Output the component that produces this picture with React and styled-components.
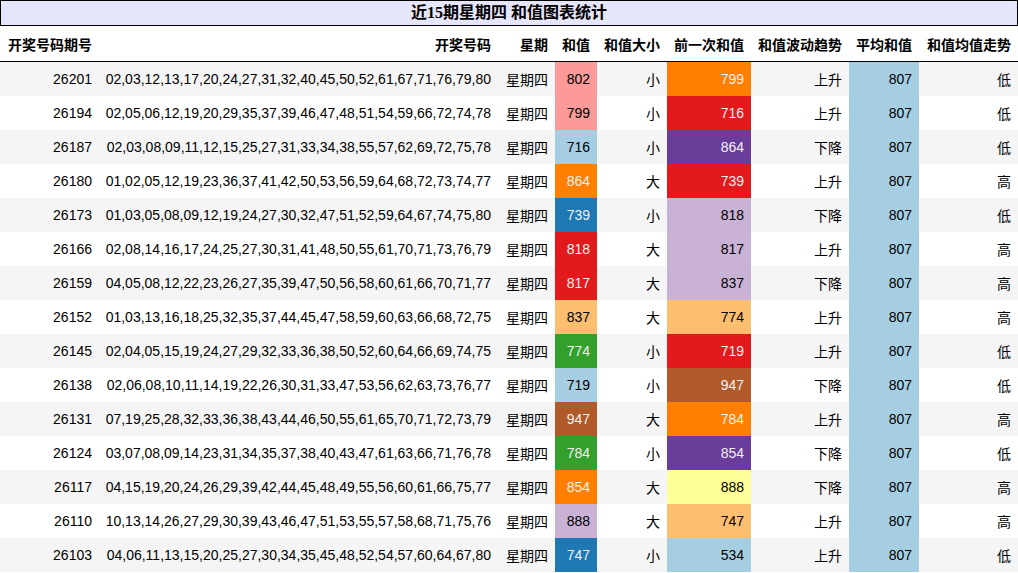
import styled, { createGlobalStyle } from 'styled-components';

const GlobalStyle = createGlobalStyle`
  html, body {
    margin: 0;
    padding: 0;
    background: #ffffff;
  }
  body {
    font-family: 'Liberation Sans', Arial, 'Noto Sans CJK SC', sans-serif;
    color: #000000;
  }
`;

// Paired colormap
const C = {
  lblue: '#a6cee3',
  blue: '#1f78b4',
  green: '#33a02c',
  pink: '#fb9a99',
  red: '#e31a1c',
  lorange: '#fdbf6f',
  orange: '#ff7f00',
  lav: '#cab2d6',
  purple: '#6a3d9a',
  yellow: '#ffff99',
  brown: '#b15928',
};

const DARK = [C.blue, C.green, C.red, C.orange, C.purple, C.brown];

const rows = [
  ['26201', '02,03,12,13,17,20,24,27,31,32,40,45,50,52,61,67,71,76,79,80', 802, 'pink', '小', 799, 'orange', '上升', '低'],
  ['26194', '02,05,06,12,19,20,29,35,37,39,46,47,48,51,54,59,66,72,74,78', 799, 'pink', '小', 716, 'red', '上升', '低'],
  ['26187', '02,03,08,09,11,12,15,25,27,31,33,34,38,55,57,62,69,72,75,78', 716, 'lblue', '小', 864, 'purple', '下降', '低'],
  ['26180', '01,02,05,12,19,23,36,37,41,42,50,53,56,59,64,68,72,73,74,77', 864, 'orange', '大', 739, 'red', '上升', '高'],
  ['26173', '01,03,05,08,09,12,19,24,27,30,32,47,51,52,59,64,67,74,75,80', 739, 'blue', '小', 818, 'lav', '下降', '低'],
  ['26166', '02,08,14,16,17,24,25,27,30,31,41,48,50,55,61,70,71,73,76,79', 818, 'red', '大', 817, 'lav', '上升', '高'],
  ['26159', '04,05,08,12,22,23,26,27,35,39,47,50,56,58,60,61,66,70,71,77', 817, 'red', '大', 837, 'lav', '下降', '高'],
  ['26152', '01,03,13,16,18,25,32,35,37,44,45,47,58,59,60,63,66,68,72,75', 837, 'lorange', '大', 774, 'lorange', '上升', '高'],
  ['26145', '02,04,05,15,19,24,27,29,32,33,36,38,50,52,60,64,66,69,74,75', 774, 'green', '小', 719, 'red', '上升', '低'],
  ['26138', '02,06,08,10,11,14,19,22,26,30,31,33,47,53,56,62,63,73,76,77', 719, 'lblue', '小', 947, 'brown', '下降', '低'],
  ['26131', '07,19,25,28,32,33,36,38,43,44,46,50,55,61,65,70,71,72,73,79', 947, 'brown', '大', 784, 'orange', '上升', '高'],
  ['26124', '03,07,08,09,14,23,31,34,35,37,38,40,43,47,61,63,66,71,76,78', 784, 'green', '小', 854, 'purple', '下降', '低'],
  ['26117', '04,15,19,20,24,26,29,39,42,44,45,48,49,55,56,60,61,66,75,77', 854, 'orange', '大', 888, 'yellow', '下降', '高'],
  ['26110', '10,13,14,26,27,29,30,39,43,46,47,51,53,55,57,58,68,71,75,76', 888, 'lav', '大', 747, 'lorange', '上升', '高'],
  ['26103', '04,06,11,13,15,20,25,27,30,34,35,45,48,52,54,57,60,64,67,80', 747, 'blue', '小', 534, 'lblue', '上升', '低'],
];

const columns = [
  ['开奖号码期号', 98],
  ['开奖号码', 400],
  ['星期', 57],
  ['和值', 42],
  ['和值大小', 70],
  ['前一次和值', 84],
  ['和值波动趋势', 98],
  ['平均和值', 70],
  ['和值均值走势', 99],
];

const Table = styled.table`
  width: 1018px;
  table-layout: fixed;
  border-collapse: collapse;
  font-size: 14px;
`;

const Caption = styled.caption`
  height: 24px;
  line-height: 24px;
  border: 1px solid #000000;
  background: #e6e6fa;
  font-family: 'Liberation Serif', 'Noto Sans CJK SC', serif;
  font-weight: bold;
  font-size: 16px;
  text-align: center;
  box-sizing: content-box;
`;

const HeadCell = styled.th`
  height: 35px;
  padding: 0 7px 0 0;
  text-align: right;
  font-weight: bold;
  white-space: nowrap;
  border-bottom: 1px solid #000000;
  background: #ffffff;
  &:first-child {
    text-align: left;
    padding-left: 8px;
  }
`;

const Row = styled.tr`
  background: ${(p) => (p.$odd ? '#ffffff' : '#f5f5f5')};
`;

const Cell = styled.td`
  height: 34px;
  padding: 0 7px 0 0;
  text-align: right;
  white-space: nowrap;
  vertical-align: middle;
  background: ${(p) => p.$bg || 'transparent'};
  color: ${(p) => (p.$light ? '#f1f1f1' : '#000000')};
  &:first-child {
    padding-right: 6px;
  }
`;

const ColorCell = ({ tone, children }) => {
  const bg = C[tone];
  return (
    <Cell $bg={bg} $light={DARK.includes(bg)}>
      {children}
    </Cell>
  );
};

const App = () => {
  return (
    <>
      <GlobalStyle />
      <Table>
        <Caption>近15期星期四 和值图表统计</Caption>
        <colgroup>
          {columns.map(([name, w]) => (
            <col key={name} style={{ width: w }} />
          ))}
        </colgroup>
        <thead>
          <tr>
            {columns.map(([name]) => (
              <HeadCell key={name}>{name}</HeadCell>
            ))}
          </tr>
        </thead>
        <tbody>
          {rows.map((r, i) => (
            <Row key={r[0]} $odd={i % 2 === 1}>
              <Cell>{r[0]}</Cell>
              <Cell>{r[1]}</Cell>
              <Cell>星期四</Cell>
              <ColorCell tone={r[3]}>{r[2]}</ColorCell>
              <Cell>{r[4]}</Cell>
              <ColorCell tone={r[6]}>{r[5]}</ColorCell>
              <Cell>{r[7]}</Cell>
              <Cell $bg={C.lblue}>807</Cell>
              <Cell>{r[8]}</Cell>
            </Row>
          ))}
        </tbody>
      </Table>
    </>
  );
};

export default App;
